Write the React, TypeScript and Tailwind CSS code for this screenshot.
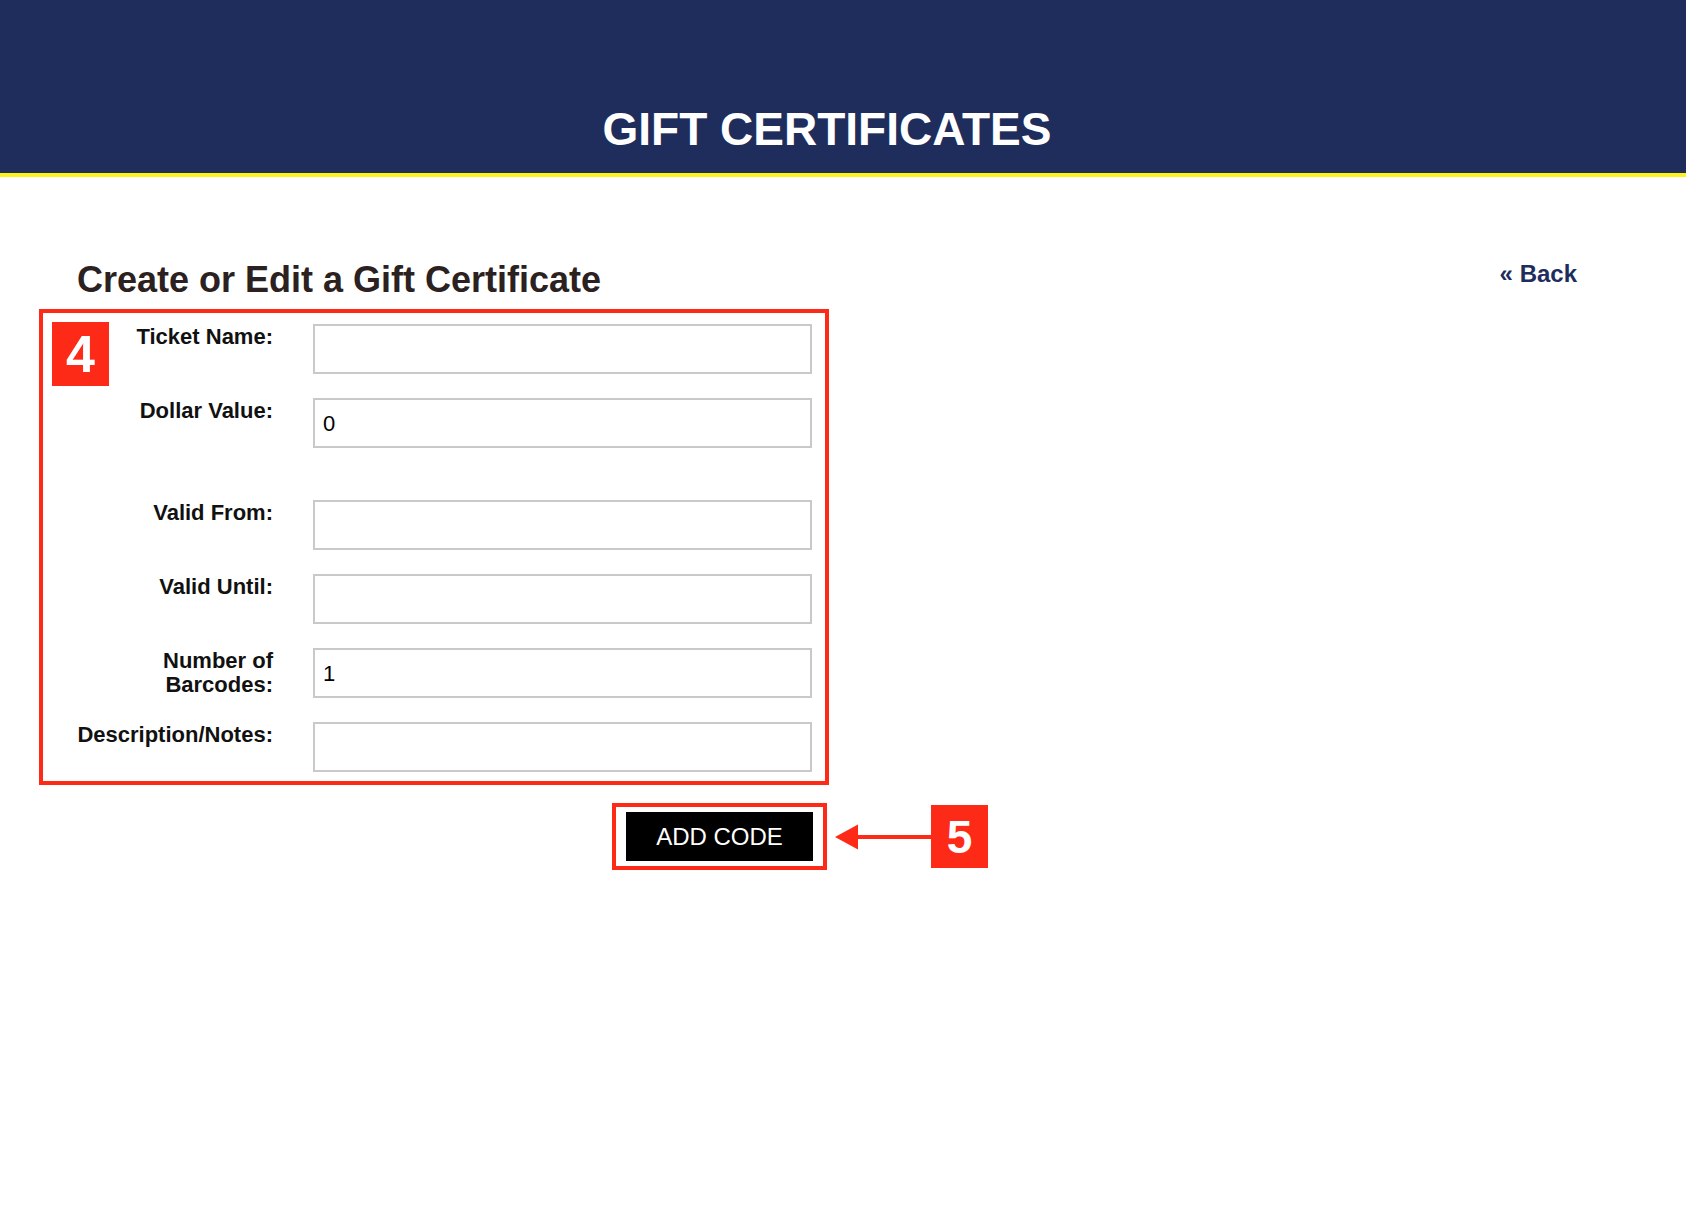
const fields = [
  { label: ["Ticket Name:"], value: "" },
  { label: ["Dollar Value:"], value: "0" },
  { label: ["Valid From:"], value: "", gapBefore: true },
  { label: ["Valid Until:"], value: "" },
  { label: ["Number of", "Barcodes:"], value: "1" },
  { label: ["Description/Notes:"], value: "" },
];

const App = () => {
  return (
    <div className="min-h-screen bg-white font-['Liberation_Sans',Arial,sans-serif]">
      <header className="h-[177px] bg-[#1e2d5c] border-b-4 border-[#fdf21b] pt-[106px]">
        <div className="ml-[77px] w-[1500px] text-center text-white text-[46px] font-bold leading-none">
          GIFT CERTIFICATES
        </div>
      </header>

      <main className="ml-[77px] w-[1500px] pt-[85px]">
        <div className="flex items-start justify-between">
          <h1 className="text-[36px] leading-[36px] font-bold text-[#2b2120]">
            Create or Edit a Gift Certificate
          </h1>
          <a href="#" className="text-[24px] leading-[24px] font-bold text-[#1e2d5c]">
            « Back
          </a>
        </div>

        <div className="relative -ml-[38px] mt-[11px] w-[790px] border-4 border-[#fd2a17] pt-[11px] pb-[9px] pl-[30px] pr-[13px]">
          <div className="absolute left-[9px] top-[9px] flex h-[64px] w-[57px] items-center justify-center bg-[#fd2a17] text-[52px] font-bold leading-none text-white">
            4
          </div>
          {fields.map((field, i) => (
            <div
              key={i}
              className={
                "flex items-start gap-[40px] " +
                (i === 0 ? "" : field.gapBefore ? "mt-[52px]" : "mt-[24px]")
              }
            >
              <div className="mt-[1px] w-[200px] text-right text-[22px] leading-[24px] font-bold text-[#111] whitespace-nowrap">
                {field.label.map((line) => (
                  <div key={line}>{line}</div>
                ))}
              </div>
              <input
                type="text"
                defaultValue={field.value}
                className="h-[50px] w-[499px] border-2 border-[#c9c9c9] bg-white px-[8px] pt-[1px] text-[22px] text-black outline-none"
              />
            </div>
          ))}
        </div>

        <div className="ml-[535px] mt-[18px] flex items-center">
          <div className="flex h-[67px] w-[215px] items-center border-4 border-[#fd2a17] pl-[10px]">
            <button className="flex h-[49px] w-[187px] items-center justify-center bg-black text-[24px] leading-none text-white">
              ADD CODE
            </button>
          </div>
          <svg width="104" height="26" viewBox="0 0 104 26" className="ml-[8px] mr-[-8px]">
            <polygon points="0,13 23,0.5 23,25.5" fill="#fd2a17" />
            <rect x="20" y="11" width="84" height="4" fill="#fd2a17" />
          </svg>
          <div className="flex h-[63px] w-[57px] items-center justify-center bg-[#fd2a17] text-[46px] font-bold leading-none text-white">
            5
          </div>
        </div>
      </main>
    </div>
  );
};

export default App;
